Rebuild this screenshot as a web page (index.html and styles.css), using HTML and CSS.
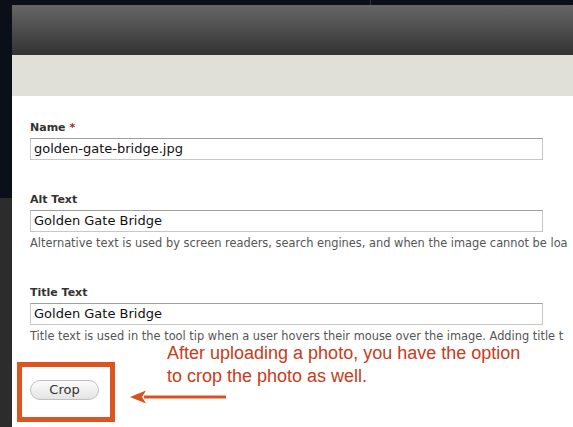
FILE: index.html
```html
<!DOCTYPE html>
<html>
<head>
<meta charset="utf-8">
<link rel="stylesheet" href="styles.css">
</head>
<body>
<div class="topbar"><span class="topbar-mark"></span></div>
<div class="shell">
  <div class="rail"></div>
  <div class="main">
    <div class="header"></div>
    <div class="subheader"></div>
    <div class="content">
      <div class="field field-name">
        <label class="label">Name <span class="req">*</span></label>
        <div class="input">golden-gate-bridge.jpg</div>
      </div>
      <div class="field field-alt">
        <label class="label">Alt Text</label>
        <div class="input">Golden Gate Bridge</div>
        <div class="desc">Alternative text is used by screen readers, search engines, and when the image cannot be loa</div>
      </div>
      <div class="field field-title">
        <label class="label">Title Text</label>
        <div class="input">Golden Gate Bridge</div>
        <div class="desc">Title text is used in the tool tip when a user hovers their mouse over the image. Adding title t</div>
      </div>
      <div class="actions">
        <button class="btn">Crop</button>
        <div class="highlight"></div>
        <svg class="arrow" width="100" height="16" viewBox="0 0 100 16">
          <path d="M14 6.5 L96 6.5 L96 9.5 L14 9.5 Z" fill="#d7521f"/>
          <path d="M0 8 L16 1.5 L12 8 L16 14.5 Z" fill="#d7521f"/>
        </svg>
        <div class="note">After uploading a photo, you have the option<br>to crop the photo as well.</div>
      </div>
    </div>
  </div>
</div>
</body>
</html>
```
FILE: styles.css
```css
html, body {
  margin: 0;
  padding: 0;
  width: 573px;
  height: 427px;
  overflow: hidden;
  background: #0b0f18;
}
.topbar {
  height: 5px;
  background: #0b0f18;
  position: relative;
}
.topbar-mark {
  position: absolute;
  left: 370px;
  top: 0;
  width: 1px;
  height: 5px;
  background: #3a3424;
}
.shell {
  display: flex;
  height: 422px;
}
.rail {
  width: 12px;
  flex: none;
  background: linear-gradient(#0b0f18 193px, #2c2c2c 193px);
}
.main {
  flex: 1;
  min-width: 0;
  display: flex;
  flex-direction: column;
  background: #fff;
}
.header {
  height: 50px;
  background: linear-gradient(#666666, #333333);
}
.subheader {
  height: 41px;
  background: #e0dfd8;
}
.content {
  flex: 1;
  padding: 25px 0 0 18px;
  font-family: "DejaVu Sans", sans-serif;
  color: #333;
  white-space: nowrap;
  overflow: hidden;
}
.field { display: flex; flex-direction: column; align-items: flex-start; }
.field-name { margin-bottom: 33px; }
.field-alt { margin-bottom: 36px; }
.field-title { margin-bottom: 0; }
.label {
  font-weight: bold;
  font-size: 11px;
  line-height: 14px;
  color: #333;
  margin-bottom: 3px;
}
.req { color: #a52a2a; }
.input {
  box-sizing: border-box;
  width: 513px;
  height: 22px;
  border: 1px solid #c8c8c8;
  border-top-color: #a0a0a0;
  padding: 0 3px;
  font-size: 13px;
  line-height: 20px;
  color: #111;
  background: #fff;
}
.desc {
  font-size: 11.4px;
  line-height: 14px;
  color: #555;
  margin-top: 4px;
}
.actions {
  position: relative;
  padding-top: 37px;
}
.btn {
  display: block;
  box-sizing: border-box;
  width: 69px;
  height: 20px;
  border-radius: 10px;
  border: 1px solid #c0c0c0;
  background: linear-gradient(#fcfcfc, #e4e4e4);
  font-family: "DejaVu Sans", sans-serif;
  font-size: 13px;
  color: #333;
  padding: 0;
  line-height: 18px;
}
.highlight {
  position: absolute;
  left: -13px;
  top: 19px;
  width: 98px;
  height: 60px;
  box-sizing: border-box;
  border: 5px solid #dc5520;
}
.arrow {
  position: absolute;
  left: 100px;
  top: 46px;
}
.note {
  position: absolute;
  left: 137px;
  top: -1px;
  font-family: "Liberation Sans", Arial, sans-serif;
  font-size: 18px;
  line-height: 23px;
  color: #c93a1a;
}
```
